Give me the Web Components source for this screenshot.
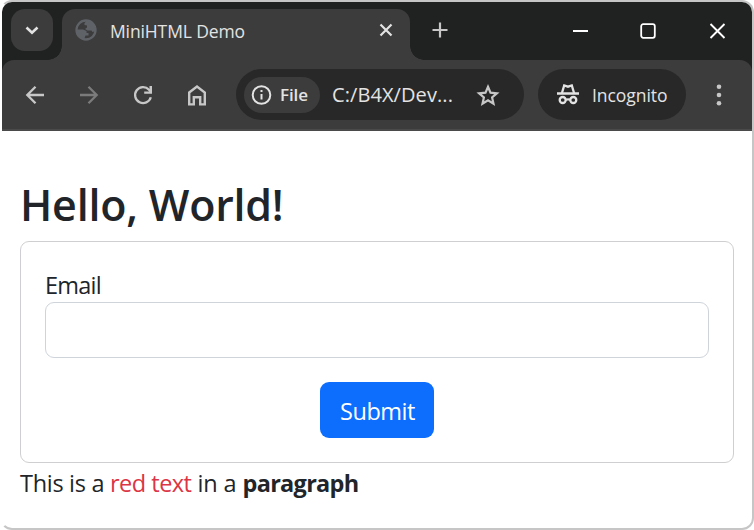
<!DOCTYPE html>
<html lang="en">
<head>
<meta charset="utf-8">
<title>MiniHTML Demo</title>
<style>
html,body{margin:0;height:100%;overflow:hidden;background:#fff}
body{font-family:"Open Sans","Noto Sans",sans-serif;color:#212529}
</style>
</head>
<body>
<browser-window>
  <tab-strip slot="tabs"><text-run width="135">MiniHTML Demo</text-run></tab-strip>
  <tool-bar slot="toolbar"></tool-bar>
  <demo-page></demo-page>
</browser-window>
<script>
const define = (name, html, init) => customElements.define(name, class extends HTMLElement {
  constructor() {
    super();
    this.attachShadow({mode: 'open'}).innerHTML = html;
  }
  connectedCallback() { if (init) init.call(this); }
});

define('browser-window', `<style>
:host{display:flex;flex-direction:column;box-sizing:border-box;width:754px;height:530px;border:2px solid #c6c6c6;border-left-color:#fff;border-radius:12px;overflow:hidden;background:#fff}
</style><slot name="tabs"></slot><slot name="toolbar"></slot><slot></slot>`);

define('tab-strip', `<style>
:host{display:flex;height:58px;flex:none;background:#202221;color:#e3e3e3}
.search{width:42px;height:42px;margin:7px 0 0 9px;border-radius:14px;background:#3c3c3c;flex:none}
.tab{position:relative;display:flex;align-items:center;box-sizing:border-box;width:348px;height:51px;margin:7px 0 0 9px;padding:0 0 8px 12px;border-radius:13px 13px 0 0;background:#3c3c3c;font-size:17.500px;flex:none}
.tab::before,.tab::after{content:"";position:absolute;bottom:0;width:14px;height:14px}
.tab::before{left:-14px;background:radial-gradient(circle at 0 0,transparent 13.5px,#3c3c3c 14px)}
.tab::after{right:-14px;background:radial-gradient(circle at 100% 0,transparent 13.5px,#3c3c3c 14px)}
svg{display:block;flex:none}
.title{margin:1px 0 0 12px;flex:1}
.x{margin:-2px 16px 0 0}
.globe{margin-top:-2px}
.plus{margin:19px 0 0 21px}
.min{margin:19px 0 0 123px}.max{margin:19px 0 0 49px}.close{margin:19px 0 0 49px}
</style>
<div class="search"><svg width="42" height="42" fill="none" stroke="#e3e3e3" stroke-width="2.600"><path d="M15.500 18.500l5.500 5.200 5.500-5.200"/></svg></div>
<div class="tab">
<svg class="globe" width="24" height="24" viewBox="0 0 24 24" fill="none"><circle cx="12" cy="12" r="9.500" stroke="#5f6368" stroke-width="2.300"/><path fill="#5f6368" d="M13 2.500l-2.500 2.500v2l2.500.500v2l-2 1.500 2.500 1.500h4l1 1.500 3-1v-4l-3-5-4-1.500zM2 11.500h7l3.500 1.500v2h2v2.500h-3l-1.500 4-4-1-3.500-4.500z"/></svg>
<div class="title"><slot></slot></div>
<svg class="x" width="16" height="16" fill="none" stroke="#e3e3e3" stroke-width="2.200"><path d="M2.500 2.500l11 11m0-11l-11 11"/></svg>
</div>
<svg class="plus" width="18" height="18" fill="none" stroke="#c7c7c7" stroke-width="2.200"><path d="M9 1.500v15M1.500 9h15"/></svg>
<svg class="min" width="17" height="20" stroke="#fff" stroke-width="2"><path d="M1 10h15"/></svg>
<svg class="max" width="20" height="20" fill="none" stroke="#fff" stroke-width="1.800"><rect x="3.200" y="3.200" width="13.600" height="13.600" rx="2"/></svg>
<svg class="close" width="20" height="20" fill="none" stroke="#fff" stroke-width="1.900"><path d="M3.500 3l14 14M17.500 3l-14 14"/></svg>`);

define('tool-bar', `<style>
:host{display:block;height:71px;flex:none;background:#202221}
.bar{display:flex;align-items:center;box-sizing:border-box;height:71px;padding:0 21px;border-radius:12px 12px 0 0;background:#3c3c3c;color:#e3e3e3;border-bottom:2px solid #4a4a4a}
svg{display:block;flex:none}
.nav{display:flex;gap:30px}
.omni{display:flex;align-items:center;box-sizing:border-box;width:288px;height:51px;margin-left:27px;padding:0 24px 0 8px;border-radius:26px;background:#282828;flex:none}
.chip{display:flex;align-items:center;gap:8px;box-sizing:border-box;width:76px;height:36px;padding-left:6px;border-radius:18px;background:#3c3c3c;font-size:17px;font-weight:600;flex:none}
.url{margin-left:12px;flex:1;font-size:20px}
.inc{display:flex;align-items:center;gap:12px;box-sizing:border-box;width:148px;height:51px;margin-left:14px;padding-left:18px;border-radius:26px;background:#282828;font-size:17.500px;flex:none}
.dots{margin-left:28px}
</style>
<div class="bar"><div class="nav">
<svg width="24" height="24" fill="none" stroke="#c7c7c7" stroke-width="2.300"><path d="M21 12H4.500M12.500 3.800L4.300 12l8.200 8.200"/></svg>
<svg width="24" height="24" fill="none" stroke="#7b7b7b" stroke-width="2.300"><path d="M3 12h16.500M11.500 3.800l8.200 8.200-8.200 8.200"/></svg>
<svg width="24" height="24" fill="none" stroke="#c7c7c7" stroke-width="2.300"><path d="M19.800 14.300a8 8 0 1 1-1.800-7.600l1.500 1.800"/><path fill="#c7c7c7" stroke="none" d="M21 3v7.800h-7.800V8.500h5.300V3z"/></svg>
<svg width="24" height="24" fill="none" stroke="#c7c7c7" stroke-width="2.400"><path d="M4.200 9.500L12 3.500l7.800 6v11.900h-4.600v-7.200H8.800v7.200H4.200z"/></svg>
</div>
<div class="omni"><div class="chip"><svg width="22" height="22" fill="none" stroke="#e3e3e3" stroke-width="2"><circle cx="11.500" cy="11" r="8.800"/><path d="M11.500 10v5.500M11.500 6v2"/></svg><text-run width="28">File</text-run></div>
<div class="url"><text-run width="121">C:/B4X/Dev...</text-run></div>
<svg width="24" height="24" fill="none" stroke="#c7c7c7" stroke-width="2.200"><path d="M12 3.800l2.500 5.900 6.400.600-4.800 4.200 1.400 6.200-5.500-3.300-5.500 3.300 1.400-6.200-4.800-4.200 6.400-.600z"/></svg></div>
<div class="inc"><svg width="24" height="24" fill="none" stroke="#e3e3e3" stroke-width="2.300"><path d="M1 10.500h22"/><path d="M5.800 10.500l2.400-8 3.800 1.200 3.800-1.200 2.400 8"/><circle cx="6.700" cy="17" r="3"/><circle cx="17.300" cy="17" r="3"/><path d="M9.700 16.800q2.300-1 4.600 0"/></svg><text-run width="75.500">Incognito</text-run></div>
<svg class="dots" width="10" height="24" fill="#c7c7c7"><circle cx="5" cy="3.700" r="2.300"/><circle cx="5" cy="12" r="2.300"/><circle cx="5" cy="20.300" r="2.300"/></svg>
</div>`);

define('demo-page', `<style>
:host{display:block;padding:48px 18px 0;font-size:23.500px;line-height:36px}
.h{font-size:43px;line-height:52px;font-weight:600;margin-bottom:10px}
.card{box-sizing:border-box;height:222px;padding:24px;border:1px solid #cfcfd1;border-radius:9px}
.label{margin-top:1px;height:35px}
.input{display:block;box-sizing:border-box;width:100%;height:56px;border:1px solid #ced4da;border-radius:9px;background:#fff;outline:0}
.btn{display:flex;align-items:center;justify-content:center;width:114px;height:56px;margin:24px auto 0;padding:2px 0 0 1px;box-sizing:border-box;border:0;border-radius:9px;background:#0d6efd;color:#fff;font:inherit}
.p{display:flex;margin-top:2px}
</style>
<text-run class="h" width="263.500">Hello, World!</text-run>
<div class="card"><div class="label"><text-run width="56">Email</text-run></div><input class="input" aria-label="Email">
<button class="btn"><text-run width="75">Submit</text-run></button></div>
<div class="p"><text-run width="90">This is a </text-run><text-run width="81.500" style="color:#dc3545">red text</text-run><text-run width="51">&nbsp;in a </text-run><text-run width="116" style="font-weight:700">paragraph</text-run></div>`);

// A single line of text whose letter spacing is tuned so it spans `width` pixels.
// Registered last, so its surroundings already carry their final font when it measures.
define('text-run', `<style>:host{display:block;white-space:pre;flex:none}span{display:inline-block}</style><span><slot></slot></span>`, function () {
  const s = this.shadowRoot.querySelector('span');
  const n = this.textContent.length;
  const w = s.getBoundingClientRect().width;
  if (w) s.style.letterSpacing = (this.getAttribute('width') - w) / n + 'px';
});
</script>
</body>
</html>
